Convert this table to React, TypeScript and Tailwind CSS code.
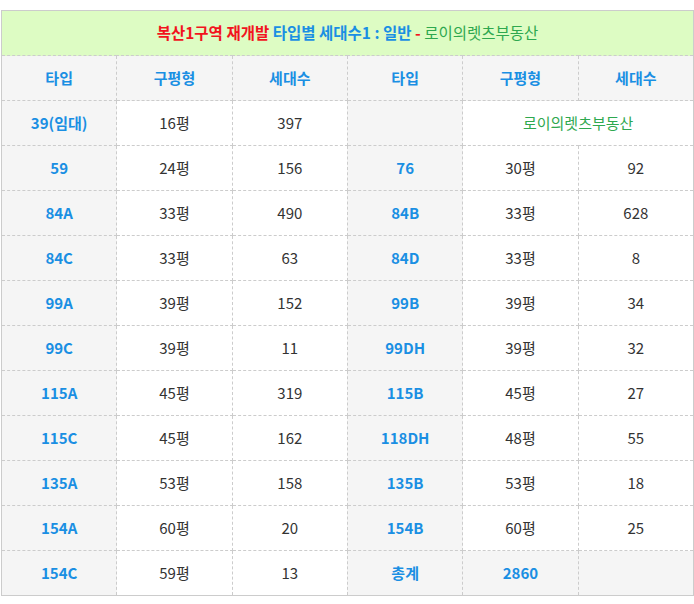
type Row = [string, string, string, string, string, string];

const rows: Row[] = [
  ["59", "24평", "156", "76", "30평", "92"],
  ["84A", "33평", "490", "84B", "33평", "628"],
  ["84C", "33평", "63", "84D", "33평", "8"],
  ["99A", "39평", "152", "99B", "39평", "34"],
  ["99C", "39평", "11", "99DH", "39평", "32"],
  ["115A", "45평", "319", "115B", "45평", "27"],
  ["115C", "45평", "162", "118DH", "48평", "55"],
  ["135A", "53평", "158", "135B", "53평", "18"],
  ["154A", "60평", "20", "154B", "60평", "25"],
];

const cell = "border border-dashed border-[#cccccc] text-center align-middle";
const typeCell = `${cell} bg-[#f5f5f5] text-[#1a8fe3] font-bold`;
const valCell = `${cell} bg-white text-[#333333]`;

export default function App() {
  return (
    <div className="min-h-screen bg-white pt-[10px] pl-px" style={{ fontFamily: '"Noto Sans CJK KR", "Noto Sans", sans-serif' }}>
      <table className="w-[693px] border-collapse border border-solid border-[#cccccc] table-fixed text-[15px]">
        <tbody>
          <tr className="h-[45px]">
            <td colSpan={6} className={`${cell} bg-[#ddfcc3] text-[15.5px]`}>
              <span className="text-[#f2141e] font-bold">복산1구역 재개발</span>{" "}
              <span className="text-[#1a8fe3] font-bold">타입별 세대수1 : 일반</span>{" "}
              <span className="text-[#f2141e] font-bold">-</span>{" "}
              <span className="text-[#2ea84f]">로이의렛츠부동산</span>
            </td>
          </tr>
          <tr className="h-[45px]">
            {["타입", "구평형", "세대수", "타입", "구평형", "세대수"].map((h, i) => (
              <td key={i} className={typeCell}>{h}</td>
            ))}
          </tr>
          <tr className="h-[45px]">
            <td className={typeCell}>39(임대)</td>
            <td className={valCell}>16평</td>
            <td className={valCell}>397</td>
            <td className={typeCell}></td>
            <td colSpan={2} className={`${cell} bg-white text-[#2ea84f]`}>로이의렛츠부동산</td>
          </tr>
          {rows.map((r, i) => (
            <tr key={i} className="h-[45px]">
              <td className={typeCell}>{r[0]}</td>
              <td className={valCell}>{r[1]}</td>
              <td className={valCell}>{r[2]}</td>
              <td className={typeCell}>{r[3]}</td>
              <td className={valCell}>{r[4]}</td>
              <td className={valCell}>{r[5]}</td>
            </tr>
          ))}
          <tr className="h-[45px]">
            <td className={typeCell}>154C</td>
            <td className={valCell}>59평</td>
            <td className={valCell}>13</td>
            <td className={typeCell}>총계</td>
            <td className={typeCell}>2860</td>
            <td className={typeCell}></td>
          </tr>
        </tbody>
      </table>
    </div>
  );
}
